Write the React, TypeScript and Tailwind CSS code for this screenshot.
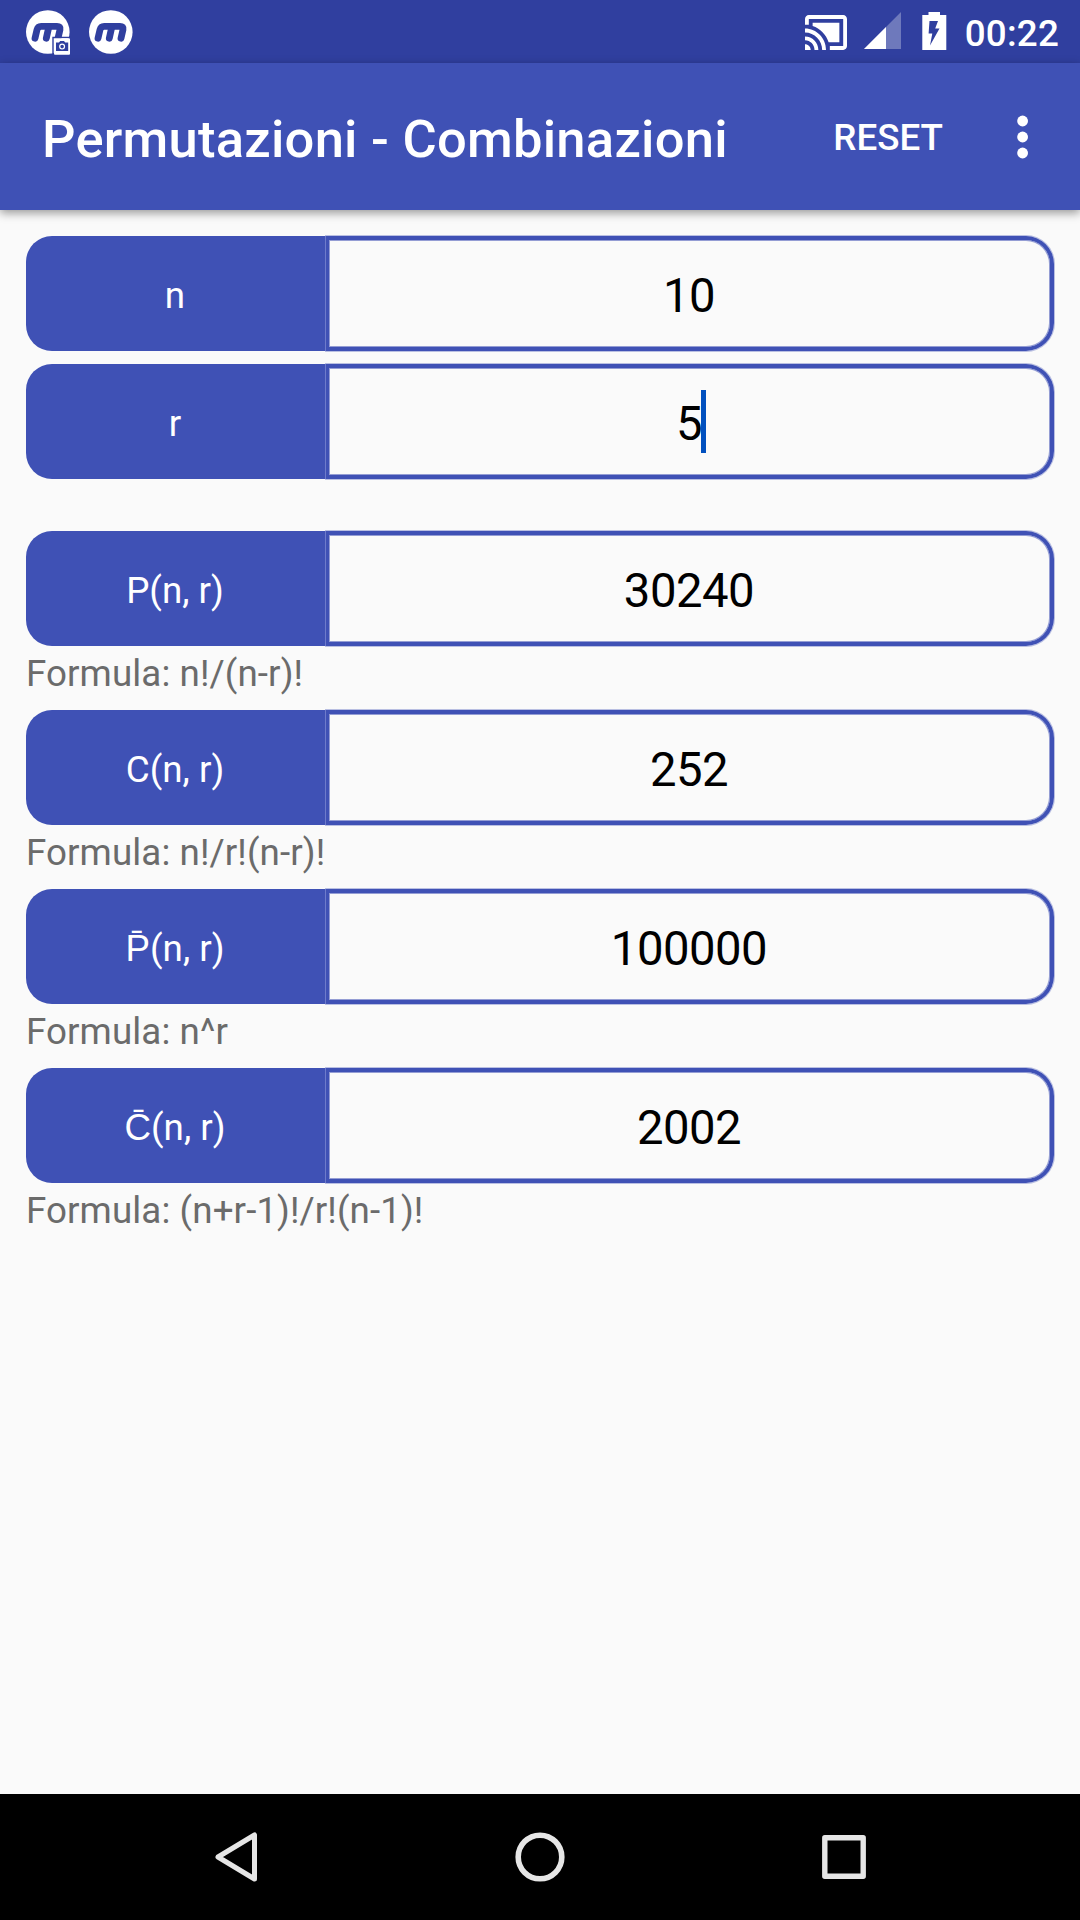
interface FieldRowProps {
  label: string
  value: string
  focused?: boolean
}

interface ResultProps {
  label: string
  value: string
  formula: string
}

const results: ResultProps[] = [
  { label: 'P(n, r)', value: '30240', formula: 'n!/(n-r)!' },
  { label: 'C(n, r)', value: '252', formula: 'n!/r!(n-r)!' },
  { label: 'P̄(n, r)', value: '100000', formula: 'n^r' },
  { label: 'C̄(n, r)', value: '2002', formula: '(n+r-1)!/r!(n-1)!' },
]

function MobizenIcon({ camera = false }: { camera?: boolean }) {
  return (
    <svg width="45" height="46" viewBox="0 0 45 46" fill="none">
      <circle cx="21.8" cy="22" r="21.8" fill="#fff" />
      <g stroke="#303f9f" strokeWidth="6.8" strokeLinecap="round" strokeLinejoin="round">
        <path d="M9 28.2 L11 19.8 Q11.8 16.3 15.2 16.3 L31 16.3 Q34.7 16.3 34 19.6 L32 28.2" />
        <path d="M22.8 17 L20.3 28.2" />
      </g>
      {camera && (
        <g>
          <path d="M27 45 V27.5 H45" stroke="#303f9f" strokeWidth="1.4" />
          <rect x="28" y="28.3" width="16" height="16.4" rx="1" fill="#fff" />
          <path d="M30 32.5 H33 L34.2 31 H38 L39.2 32.5 H42.2 V41 H30 Z" fill="#303f9f" />
          <circle cx="36.1" cy="36.6" r="2.4" stroke="#fff" strokeWidth="1.2" />
        </g>
      )}
    </svg>
  )
}

function CastIcon() {
  return (
    <svg width="42" height="35" viewBox="1 3 22 18" preserveAspectRatio="none" fill="#fff">
      <path d="M1 18v3h3c0-1.66-1.34-3-3-3zm0-4v2c2.76 0 5 2.24 5 5h2c0-3.87-3.13-7-7-7zm18-7H5v1.63c3.96 1.28 7.09 4.41 8.37 8.37H19V7zM1 10v2c4.97 0 9 4.03 9 9h2c0-6.08-4.93-11-11-11zm20-7H3c-1.1 0-2 .9-2 2v3h2V5h18v14h-7v2h7c1.1 0 2-.9 2-2V5c0-1.1-.9-2-2-2z" />
    </svg>
  )
}

function SignalIcon() {
  return (
    <svg width="37" height="37" viewBox="0 0 37 37">
      <path d="M0 37 L37 0 V37 Z" fill="#fff" fillOpacity="0.3" />
      <path d="M0 37 L22 15 V37 Z" fill="#fff" />
    </svg>
  )
}

function BatteryIcon() {
  return (
    <svg width="25" height="38" viewBox="0 0 25 38">
      <path d="M6.5 0 H18 V3 H24.3 V38 H0.3 V3 H6.5 Z" fill="#fff" />
      <path d="M7.5 9 H16 L13.2 16.5 H17.5 L8 33.5 L10.3 21.5 H6.6 Z" fill="#303f9f" />
    </svg>
  )
}

function StatusBar() {
  return (
    <div className="flex h-[63px] items-start bg-[#303f9f] pr-[21px] pl-[26px]">
      <div className="flex gap-[18px] pt-[10px]">
        <MobizenIcon camera />
        <MobizenIcon />
      </div>
      <div className="ml-auto flex items-start">
        <div className="mr-[17px] pt-[15px]">
          <CastIcon />
        </div>
        <div className="mr-[21px] pt-[12px]">
          <SignalIcon />
        </div>
        <div className="mr-[18px] pt-[12px]">
          <BatteryIcon />
        </div>
        <span className="pt-[2px] text-[36.75px] leading-[64px] font-medium tracking-[0.2px] text-white">00:22</span>
      </div>
    </div>
  )
}

function AppBar() {
  return (
    <header className="relative flex h-[147px] items-center bg-[#3f51b5] pl-[42px] text-white shadow-[0_3px_9px_rgba(0,0,0,0.4)]">
      <h1 className="pt-[5px] text-[52.5px] font-medium tracking-[0.25px] whitespace-nowrap">
        Permutazioni - Combinazioni
      </h1>
      <button className="mr-[74px] ml-auto pt-[2px] text-[36.75px] font-medium">RESET</button>
      <svg className="mr-[51px]" width="12" height="44" viewBox="0 0 12 44" fill="#fff">
        <circle cx="5.6" cy="6" r="5.4" />
        <circle cx="5.6" cy="22" r="5.4" />
        <circle cx="5.6" cy="38" r="5.4" />
      </svg>
    </header>
  )
}

function FieldRow({ label, value, focused = false }: FieldRowProps) {
  return (
    <div className="flex h-[115px] gap-px bg-[linear-gradient(#8793d6,#8793d6)] bg-[length:1px_100%] bg-[position:299px_0] bg-no-repeat">
      <div className="flex w-[299px] items-center justify-center rounded-l-[26px] bg-[#3f51b5] pt-[4px] pr-[1px] text-[36.75px] text-white">
        {label}
      </div>
      <div className="flex flex-1 items-center justify-center rounded-r-[28px] border-4 border-l-[3px] border-[#3f51b5] pt-[5px] pr-[1px] text-[47.25px] tracking-[-0.5px] text-black shadow-[0_0_0_1px_rgba(63,81,181,0.35),inset_0_0_0_1px_rgba(63,81,181,0.55)]">
        <span className="relative">
          {value}
          {focused && <span className="absolute top-[1px] right-[-4px] h-[63px] w-[5px] bg-[#0150bf]" />}
        </span>
      </div>
    </div>
  )
}

function Result({ label, value, formula }: ResultProps) {
  return (
    <div className="mb-[9px]">
      <FieldRow label={label} value={value} />
      <p className="h-[55px] text-[36.75px] leading-[55px] tracking-[0.09px] text-[#6b6b6b]">Formula: {formula}</p>
    </div>
  )
}

function NavigationBar() {
  return (
    <nav className="flex h-[126px] items-center justify-between bg-black pr-[213px] pl-[214px]">
      <svg width="44" height="52" viewBox="0 0 44 52" fill="none" stroke="#e6e6e6" strokeWidth="5" strokeLinejoin="round">
        <path d="M40.5 4 V48 L4 26 Z" />
      </svg>
      <svg width="52" height="52" viewBox="0 0 52 52" fill="none" stroke="#e6e6e6" strokeWidth="5.6">
        <circle cx="26" cy="26" r="21.8" />
      </svg>
      <svg width="46" height="46" viewBox="0 0 46 46" fill="none" stroke="#e6e6e6" strokeWidth="5.4" strokeLinejoin="round">
        <rect x="3.8" y="3.8" width="38.4" height="38.4" />
      </svg>
    </nav>
  )
}

export default function App() {
  return (
    <div className="flex h-[1920px] w-[1080px] flex-col overflow-hidden bg-[#fafafa] font-['Roboto',sans-serif]">
      <StatusBar />
      <AppBar />
      <main className="flex-1 px-[26px] pt-[26px]">
        <div className="mb-[52px] flex flex-col gap-[13px]">
          <FieldRow label="n" value="10" />
          <FieldRow label="r" value="5" focused />
        </div>
        {results.map((result) => (
          <Result key={result.label} {...result} />
        ))}
      </main>
      <NavigationBar />
    </div>
  )
}
